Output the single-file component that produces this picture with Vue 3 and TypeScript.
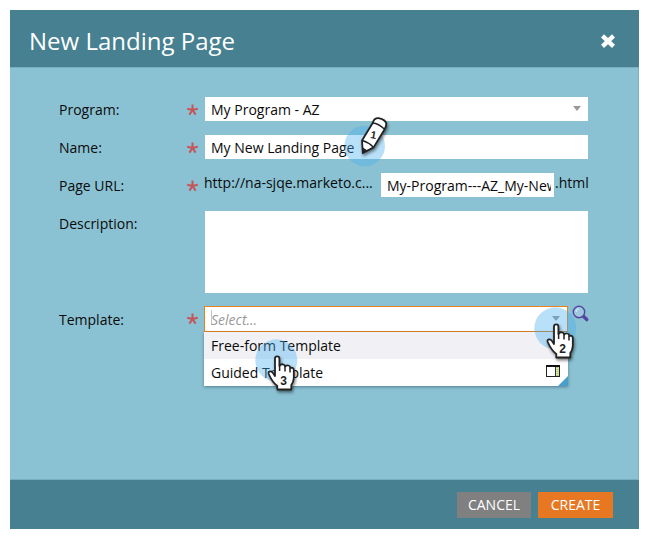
<script setup lang="ts">
import { ref } from 'vue'

interface Hint {
  step: number
  cls: string
}

const program = ref('My Program - AZ')
const pageName = ref('My New Landing Page')
const urlPrefix = 'http://na-sjqe.marketo.c...'
const slug = ref('My-Program---AZ_My-New')
const description = ref('')
const templates: string[] = ['Free-form Template', 'Guided Template']
const active = ref(0)
const hands: Hint[] = [
  { step: 2, cls: 'hint-two' },
  { step: 3, cls: 'hint-three' },
]
const starPath = 'M5.500 6V.5M5.500 6L.2 4.700M5.500 6l5.300-1.300M5.500 6L2.400 10.600M5.500 6l3.100 4.600'
</script>

<template>
  <div class="dialog">
    <header class="head">
      <h1>New Landing Page</h1>
      <svg class="close" width="16" height="16" viewBox="0 0 16 16">
        <path d="M2.500 2.900l11 10.400M13.500 2.900L2.500 13.300" />
      </svg>
    </header>

    <main class="body">
      <div class="row">
        <label>Program:</label>
        <svg class="star" viewBox="0 0 12 12"><path :d="starPath" /></svg>
        <div class="field combo"><span>{{ program }}</span><i class="caret"></i></div>
      </div>
      <div class="row">
        <label>Name:</label>
        <svg class="star" viewBox="0 0 12 12"><path :d="starPath" /></svg>
        <div class="field"><span>{{ pageName }}</span></div>
      </div>
      <div class="row">
        <label>Page URL:</label>
        <svg class="star" viewBox="0 0 12 12"><path :d="starPath" /></svg>
        <div class="url">
          <span class="prefix">{{ urlPrefix }}</span>
          <div class="field slug"><span>{{ slug }}</span></div>
          <span class="ext">.html</span>
        </div>
      </div>
      <div class="row tall">
        <label>Description:</label>
        <span></span>
        <div class="field area">{{ description }}</div>
      </div>
      <div class="row template">
        <label>Template:</label>
        <svg class="star" viewBox="0 0 12 12"><path :d="starPath" /></svg>
        <div class="picker">
          <div class="select"><em>Select...</em><i class="caret"></i></div>
          <ul class="list">
            <li v-for="(t, i) in templates" :key="t" :class="{ active: i === active }">
              <span>{{ t }}</span>
              <svg v-if="i === 1" width="14" height="12" viewBox="0 0 14 12">
                <path d="M10 2h3v9h-3z" fill="#dcebb0" />
                <path d="M11.500 2v9" stroke="#a9c46c" stroke-width="2" stroke-dasharray="1 1" />
                <rect x=".5" y=".5" width="13" height="11" fill="none" stroke="#222" />
                <path d="M0 1h14" stroke="#111" stroke-width="2" />
                <path d="M9.500 2v9" stroke="#333" />
              </svg>
            </li>
          </ul>
        </div>
        <svg class="search" width="18" height="18" viewBox="0 0 18 18">
          <path d="M10.800 10.800l4 3.800" stroke="#5746a0" stroke-width="3.400" stroke-linecap="round" />
          <circle cx="7" cy="7" r="5.700" fill="#9cc9e0" stroke="#5746a0" stroke-width="1.500" />
          <path d="M4 7a3 3 0 0 1 3-3" fill="none" stroke="#d8edf7" stroke-width="1.200" />
        </svg>
      </div>
    </main>

    <footer class="foot">
      <button class="cancel">CANCEL</button>
      <button class="create">CREATE</button>
    </footer>

    <svg class="hint hint-one" width="54" height="60" viewBox="340 112 54 60">
      <circle cx="364.700" cy="146" r="20.300" />
      <g class="tool">
        <path class="ink" d="M373 122.500Q374 118 378.500 118.200Q385.500 119.800 386.300 123.500Q386.300 126.500 384.500 129.500L373.600 147.400L362.800 153L362 140.500Z" />
        <path class="line" d="M372.800 123Q378.500 123.500 384.300 129M362.300 140.500Q368 142 373.200 147" />
        <path d="M362 147l5.200 3.200-4.900 4z" fill="#222" />
      </g>
      <text x="373.400" y="138.600" transform="rotate(10 373.400 135)">1</text>
    </svg>
    <svg
      v-for="h in hands"
      :key="h.step"
      :class="['hint', h.cls]"
      width="52"
      height="60"
      viewBox="530 304 52 60"
    >
      <circle cx="555.300" cy="328.300" r="21" />
      <g class="tool">
        <path class="ink" d="M554 342V326.500Q554 324.300 556.200 324.300Q558.400 324.300 558.400 326.500V334Q559.800 332 562 332.300Q564 332.500 564.200 334.500Q565.500 332.800 567.500 333.500Q569.300 334 569.300 336Q572.600 335 572.800 338V346Q572.500 350 570.300 353V357.500H556.300V354Q551.500 350.500 547.700 342Q547 339.800 549 339.300Q551.300 339 554 344Z" />
        <path class="line" d="M558.600 333.500V339M564 334V339.500M569 335.500V340.500" />
      </g>
      <text class="digit" x="562.600" y="352.500">{{ h.step }}</text>
    </svg>
  </div>
</template>

<style>
body {
  margin: 0;
  background: #fff;
}
</style>

<style scoped>
.dialog {
  position: relative;
  box-sizing: border-box;
  display: flex;
  flex-direction: column;
  width: 629px;
  height: 519px;
  margin: 10px 0 0 10px;
  background: #8ac2d3;
  font-family: 'Open Sans', 'Noto Sans', sans-serif;
  font-size: 14px;
  color: #0b0b0b;
  white-space: nowrap;
}
.head {
  display: flex;
  justify-content: space-between;
  align-items: center;
  height: 57px;
  box-sizing: border-box;
  padding: 4px 23px 0 19px;
  background: #468091;
}
h1 {
  margin: 0;
  font-size: 24px;
  font-weight: 400;
  line-height: 32px;
  color: #fff;
}
.close path {
  fill: none;
  stroke: #fff;
  stroke-width: 4.4;
}
.body {
  flex: 1;
  box-sizing: border-box;
  padding: 29px 0 0 49px;
  border: 1px solid #79b0c1;
  border-left: 0;
}
.row {
  display: grid;
  grid-template-columns: 128px 18px 383px;
  height: 24px;
  margin-bottom: 14px;
  line-height: 26px;
}
.star {
  width: 12px;
  height: 12px;
  margin-top: 7px;
}
.star path {
  fill: none;
  stroke: #c55558;
  stroke-width: 2;
}
.field {
  box-sizing: border-box;
  height: 24px;
  padding: 0 6px;
  background: #fff;
}
.field span {
  display: block;
  overflow: hidden;
}
.combo {
  display: flex;
  justify-content: space-between;
  padding-right: 7px;
}
.caret {
  width: 0;
  height: 0;
  margin-top: 9px;
  border: 4.5px solid transparent;
  border-top: 5px solid #9a9a9a;
  border-bottom: 0;
}
.url {
  display: flex;
}
.url > * {
  flex: none;
}
.prefix {
  width: 176px;
  margin: -3px 0 0 -1px;
}
.slug {
  width: 173px;
  padding-right: 3px;
  margin-left: 1px;
}
.ext {
  margin: -3px 0 0 1px;
}
.tall {
  height: 82px;
  margin-bottom: 13px;
}
.area {
  height: 82px;
}
.template {
  grid-template-columns: 128px 17px 364px 20px;
  height: 26px;
  line-height: 28px;
}
.select {
  display: flex;
  justify-content: space-between;
  box-sizing: border-box;
  height: 26px;
  padding: 0 7px 0 6px;
  border: 1px solid #e8811e;
  background: #fff;
  line-height: 25px;
}
.select em {
  height: 15px;
  margin-top: 3px;
  border-left: 1px solid #c4c4c4;
  line-height: 19px;
  text-indent: -1px;
  color: #999;
}
.list {
  position: relative;
  margin: 0;
  padding: 0;
  list-style: none;
  background: #fff;
  box-shadow: 0 1px 3px rgba(30, 60, 75, 0.5);
}
.list::after {
  content: '';
  position: absolute;
  right: 0;
  bottom: 0;
  border-left: 10px solid transparent;
  border-bottom: 10px solid #4a9fca;
}
.list li {
  display: flex;
  justify-content: space-between;
  align-items: center;
  height: 27px;
  padding: 0 8px 0 7px;
  line-height: 27px;
}
.list li svg {
  margin-top: -3px;
}
.list li.active {
  background: #f1f1f5;
}
.search {
  margin: -1px 0 0 4px;
}
.foot {
  display: flex;
  justify-content: flex-end;
  gap: 7px;
  box-sizing: border-box;
  height: 49px;
  padding: 12px 26px 0 0;
  background: #468091;
}
.foot button {
  height: 26px;
  padding: 0;
  border: 0;
  font: 14px/26px 'Open Sans', 'Noto Sans', sans-serif;
  color: #fff;
}
.cancel {
  width: 74px;
  background: #808080;
}
.create {
  width: 75px;
  background: #e87722;
}
.hint {
  position: absolute;
}
.hint circle {
  fill: #48aef0;
  fill-opacity: 0.38;
}
.hint .tool {
  filter: drop-shadow(1px 2px 1.5px rgba(0, 0, 0, 0.5));
}
.hint .ink {
  fill: #fff;
  stroke: #222;
  stroke-width: 1.8;
  stroke-linejoin: round;
}
.hint .line {
  fill: none;
  stroke: #222;
  stroke-width: 1.5;
}
.hint text {
  font: 700 10.5px 'Liberation Sans', sans-serif;
  text-anchor: middle;
  fill: #222;
}
.hint .digit {
  font-size: 12px;
}
.hint-one {
  left: 330px;
  top: 102px;
}
.hint-two {
  left: 520px;
  top: 294px;
}
.hint-three {
  left: 241px;
  top: 326px;
}
</style>
